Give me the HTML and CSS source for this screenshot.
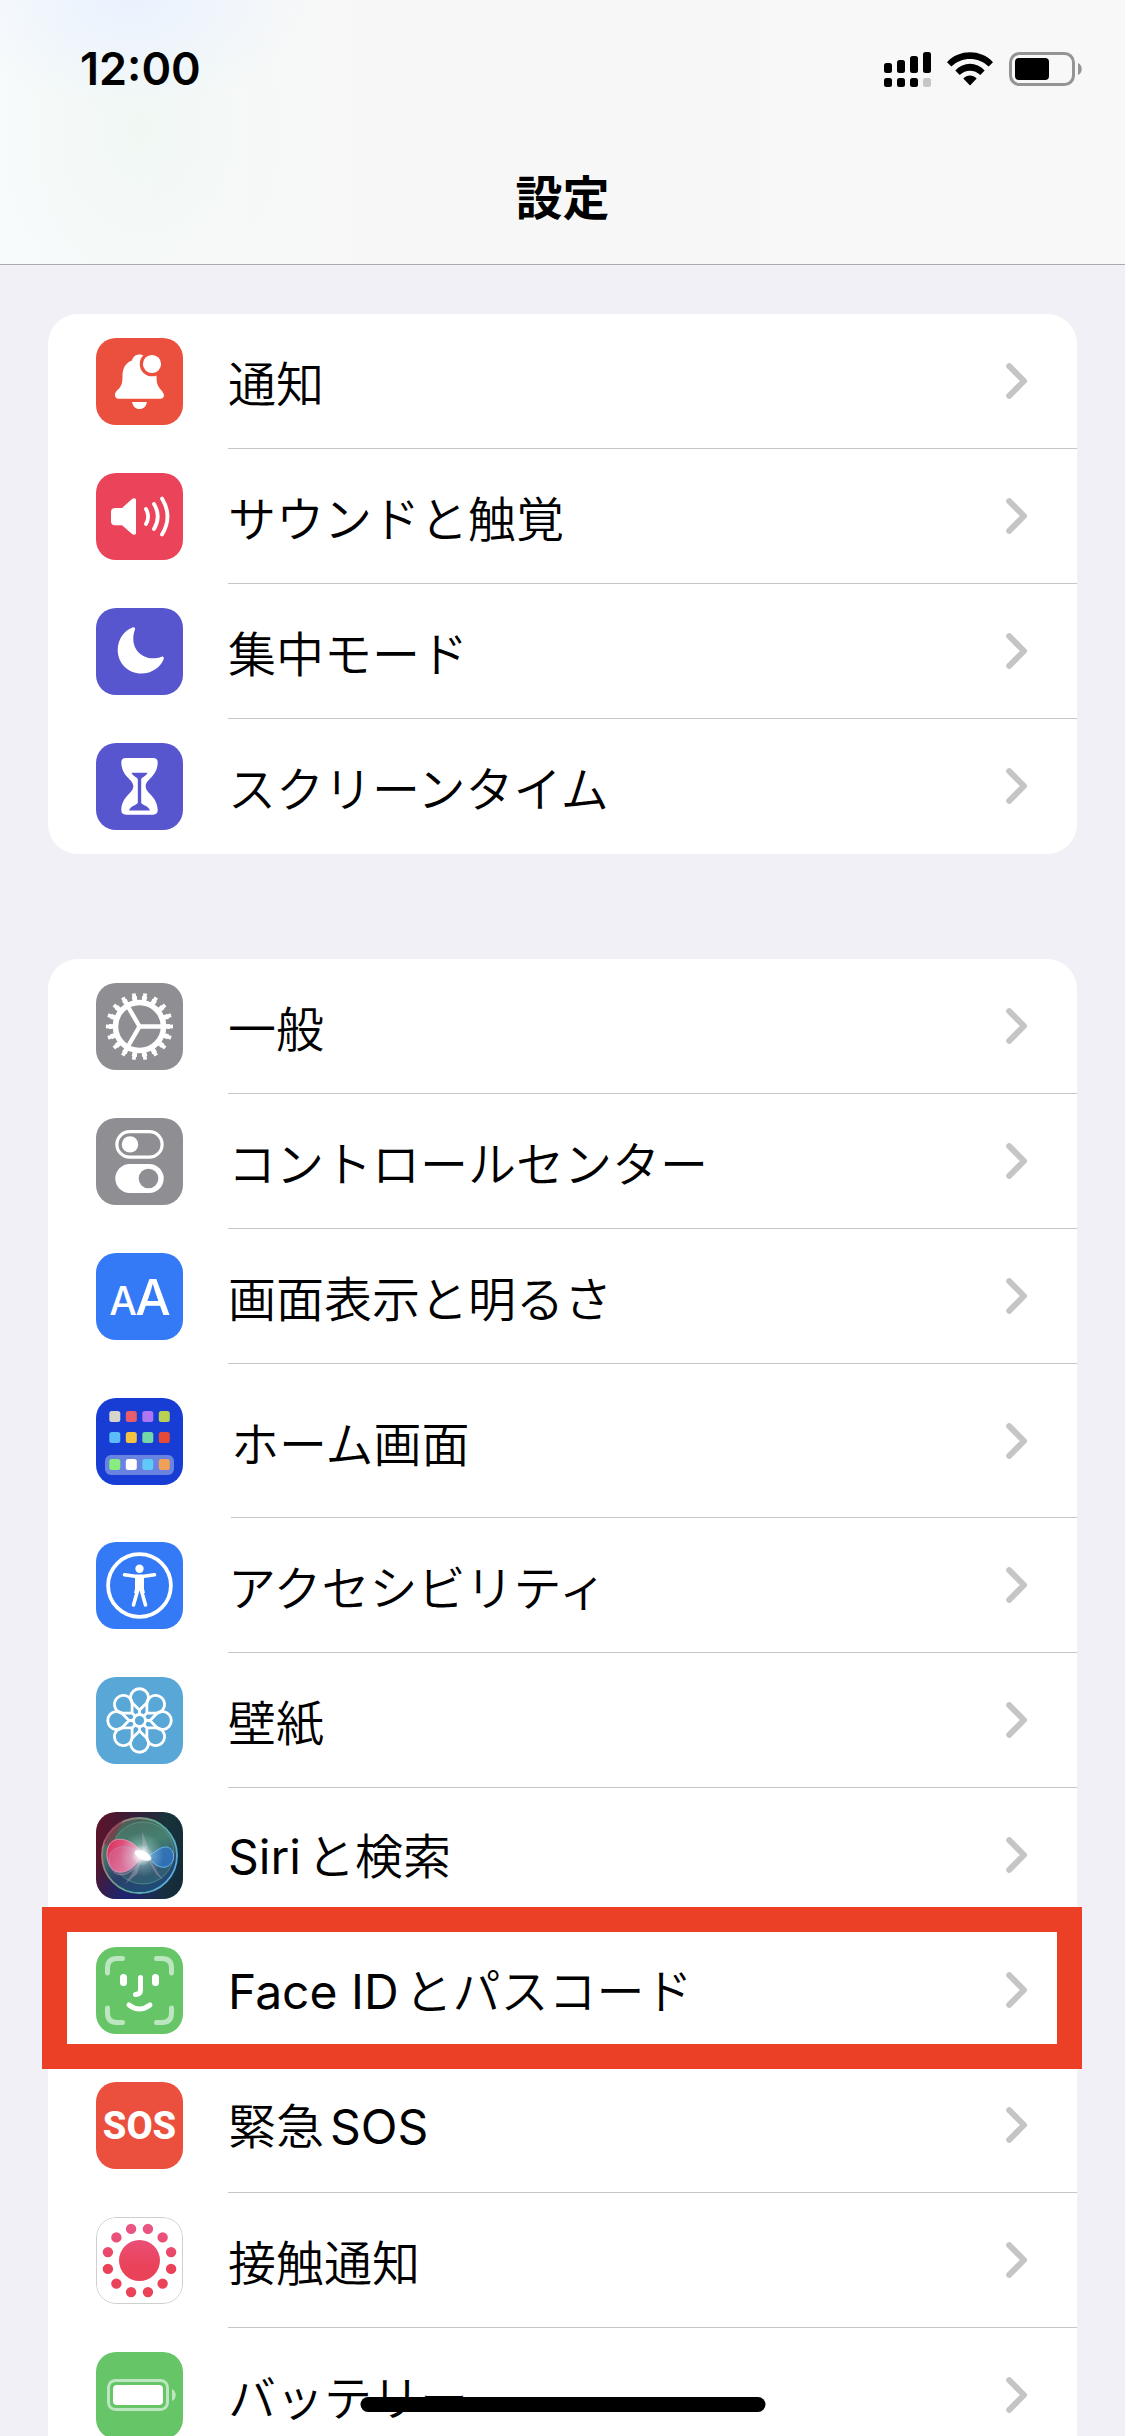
FILE: index.html
```html
<!DOCTYPE html>
<html lang="ja">
<head>
<meta charset="utf-8">
<meta name="viewport" content="width=device-width, initial-scale=1">
<title>設定</title>
<link rel="stylesheet" href="styles.css">
</head>
<body>
<svg class="defs" aria-hidden="true">
  <symbol id="chevron" viewBox="0 0 22 36"><path d="M3.2 3.2 18 18 3.2 32.8" fill="none" stroke="#c5c5c7" stroke-width="6" stroke-linecap="round" stroke-linejoin="round"/></symbol>
  <path id="petal" d="M43.5 33 35.8 25.4A9 9 0 1 1 51.2 25.4ZM43.5 33V38"/>
</svg>

<header class="header">
  <div class="status">
    <time class="clock">12:00</time>
    <div class="indicators">
      <svg width="47" height="35" viewBox="0 0 47 35" aria-label="電波">
        <rect x="0" y="11" width="8" height="10" rx="2.5"/><rect x="13" y="8" width="8" height="13" rx="2.5"/><rect x="26" y="4" width="8" height="17" rx="2.5"/><rect x="39" y="0" width="8" height="21" rx="2.5"/>
        <rect x="0" y="26" width="8" height="9" rx="2.5"/><rect x="13" y="26" width="8" height="9" rx="2.5"/><rect x="26" y="26" width="8" height="9" rx="2.5"/><rect x="39" y="26" width="8" height="9" rx="2.5" fill="#c6c6c6"/>
      </svg>
      <svg width="46" height="34" viewBox="0 0 46 34" aria-label="Wi-Fi">
        <path d="M0 10.2C12-3 34-3 46 10.2L41.7 14.6C31.500 4.300 14.500 4.300 4.300 14.600ZM8.300 18.600C16.500 9.600 29.500 9.600 37.700 18.600L33.300 23.100C27.500 17.200 18.500 17.200 12.700 23.100ZM16.300 26.600C20 22.300 26 22.300 29.700 26.600L23 33.500Z"/>
      </svg>
      <svg width="73" height="34" viewBox="0 0 73 34" aria-label="バッテリー残量">
        <rect x="1.500" y="1.500" width="63" height="31" rx="9" fill="none" stroke="#949494" stroke-width="3"/><rect x="6" y="6" width="34" height="22" rx="4"/><path d="M69 11C74 13 74 21 69 23Z" fill="#949494"/>
      </svg>
    </div>
  </div>
  <h1 class="title">設定</h1>
</header>

<main class="content">
  <ul class="group">
    <li class="row"><a class="link" href="#notifications">
      <svg class="icon icon-red" viewBox="0 0 87 87"><g fill="#fff"><path d="M43.500 16.500C40 16.500 37 18.500 36 22.500 29 25 26.500 31 26.500 38 26.500 46 25 49 21 52.500 19 54.500 19 56 19 57.500 19 59.500 20.500 60.700 22.500 60.700H64.500C66.500 60.700 68 59.500 68 57.500 68 56 67 54.500 66 53 62 49 60.500 46 60.500 38 60.500 31 58 25 51 22.500 50 18.500 47 16.500 43.500 16.500ZM36 64H51C50 68.500 47.500 71 43.500 71S37 68.500 36 64Z"/><circle cx="56" cy="26" r="10.700" stroke="#eb4f3d" stroke-width="3.200"/></g></svg>
      <span class="body"><span class="label">通知</span><svg class="chevron"><use href="#chevron"/></svg></span></a></li>
    <li class="row"><a class="link" href="#sounds">
      <svg class="icon icon-pink" viewBox="0 0 87 87"><path d="M19 35H26L35.500 26.500C38 24.500 40 25 40 27.500V59.500C40 62 38 62.500 35.500 60.500L26 52.300H19Q15 52.300 15 48.300V39Q15 35 19 35Z" fill="#fff"/><path d="M50 36Q54.300 43.500 50 51M58 31Q65.500 43.500 58 56M66 25.500Q77 43.500 66 61.500" fill="none" stroke="#fff" stroke-width="3.800" stroke-linecap="round"/></svg>
      <span class="body"><span class="label">サウンドと触覚</span><svg class="chevron"><use href="#chevron"/></svg></span></a></li>
    <li class="row"><a class="link" href="#focus">
      <svg class="icon icon-indigo" viewBox="0 0 87 87"><path d="M36.500 19.500C28 22.500 21.700 31.500 21.700 42 21.700 55 32 65.500 45.500 65.500 56 65.500 64.500 59.500 67.800 50.800 68.300 49.300 67 48.200 65.500 48.700 62 50.200 59 50.300 57 50.300 46 50.300 37.300 42 37.300 31 37.300 28 37.600 25 39 21.500 39.600 19.900 38 19 36.500 19.500Z" fill="#fff"/></svg>
      <span class="body"><span class="label">集中モード</span><svg class="chevron"><use href="#chevron"/></svg></span></a></li>
    <li class="row"><a class="link" href="#screen-time">
      <svg class="icon icon-indigo" viewBox="0 0 87 87"><path d="M30 15H57Q62 15 61.700 20C61 34 49.700 36 49.700 43.300S61 53 61.700 66.500Q62 71.700 57 71.700H30Q25 71.700 25.300 66.500C26 53 37.300 50.500 37.300 43.300S26 34 25.300 20Q25 15 30 15Z" fill="#fff"/><path d="M35.500 29.800H51.500C50.500 33 46.500 34 45.200 36V60C47 62.500 52 62.500 54 67.500H33C35 62.500 40 62.500 41.800 60V36C40.500 34 36.500 33 35.500 29.800Z" fill="#5856ce"/></svg>
      <span class="body"><span class="label">スクリーンタイム</span><svg class="chevron"><use href="#chevron"/></svg></span></a></li>
  </ul>

  <ul class="group">
    <li class="row"><a class="link" href="#general">
      <svg class="icon icon-gray" viewBox="0 0 87 87"><g fill="none" stroke="#fff"><circle cx="43.500" cy="43.500" r="24" stroke-width="5.600"/><circle cx="43.500" cy="43.500" r="28" stroke-width="5" pathLength="18" stroke-dasharray=".5 .5" stroke-dashoffset=".25"/><circle cx="43.500" cy="43.500" r="31.300" stroke-width="4.500" pathLength="18" stroke-dasharray=".34 .66" stroke-dashoffset=".17"/><path d="M43.500 43.500H66M43.500 43.500 32.200 24M43.500 43.500 32.200 63" stroke-width="4.400"/></g></svg>
      <span class="body"><span class="label">一般</span><svg class="chevron"><use href="#chevron"/></svg></span></a></li>
    <li class="row"><a class="link" href="#control-center">
      <svg class="icon icon-gray" viewBox="0 0 87 87"><rect x="20.900" y="13.600" width="45.200" height="25.600" rx="12.800" fill="none" stroke="#fff" stroke-width="3.200"/><circle cx="34" cy="26.400" r="8.200" fill="#fff"/><rect x="19.300" y="46" width="48.400" height="29" rx="14.500" fill="#fff"/><circle cx="52.500" cy="60.500" r="9.800" fill="#8e8e93"/></svg>
      <span class="body"><span class="label">コントロールセンター</span><svg class="chevron"><use href="#chevron"/></svg></span></a></li>
    <li class="row"><a class="link" href="#display">
      <svg class="icon icon-blue" viewBox="0 0 87 87"><text class="glyph-a" x="27" y="62" font-size="39">A</text><text class="glyph-a" x="57" y="62" font-size="50">A</text></svg>
      <span class="body"><span class="label">画面表示と明るさ</span><svg class="chevron"><use href="#chevron"/></svg></span></a></li>
    <li class="row row-tall"><a class="link" href="#home-screen">
      <svg class="icon icon-home" viewBox="0 0 87 87"><rect x="9" y="57" width="69" height="20" rx="6" fill="#6883e0"/>
        <rect x="13.300" y="13" width="11" height="11" rx="2.500" fill="#d6d5cc"/><rect x="29.800" y="13" width="11" height="11" rx="2.500" fill="#e85d6c"/><rect x="46.300" y="13" width="11" height="11" rx="2.500" fill="#ae75f4"/><rect x="62.800" y="13" width="11" height="11" rx="2.500" fill="#b9d153"/>
        <rect x="13.300" y="34" width="11" height="11" rx="2.500" fill="#5bbcf8"/><rect x="29.800" y="34" width="11" height="11" rx="2.500" fill="#f5c343"/><rect x="46.300" y="34" width="11" height="11" rx="2.500" fill="#74d7a8"/><rect x="62.800" y="34" width="11" height="11" rx="2.500" fill="#e54a39"/>
        <rect x="13.300" y="61" width="11" height="11" rx="2.500" fill="#86ee7e"/><rect x="29.800" y="61" width="11" height="11" rx="2.500" fill="#fff"/><rect x="46.300" y="61" width="11" height="11" rx="2.500" fill="#5fcaf9"/><rect x="62.800" y="61" width="11" height="11" rx="2.500" fill="#f0a057"/></svg>
      <span class="body"><span class="label">ホーム画面</span><svg class="chevron"><use href="#chevron"/></svg></span></a></li>
    <li class="row"><a class="link" href="#accessibility">
      <svg class="icon icon-blue" viewBox="0 0 87 87"><circle cx="43.500" cy="43.500" r="31.400" fill="none" stroke="#fff" stroke-width="3.800"/><circle cx="43.500" cy="26.700" r="4.200" fill="#fff"/><path d="M28.500 32.800 39 34.300H48L58.500 32.800M37.500 63 42 47H45L49.500 63" fill="none" stroke="#fff" stroke-width="3.600" stroke-linecap="round" stroke-linejoin="round"/><path d="M39 33.500H48V47L49 51H45.500L43.500 47 41.500 51H38L39 47Z" fill="#fff"/></svg>
      <span class="body"><span class="label">アクセシビリティ</span><svg class="chevron"><use href="#chevron"/></svg></span></a></li>
    <li class="row"><a class="link" href="#wallpaper">
      <svg class="icon icon-sky" viewBox="0 0 87 87"><g fill="none" stroke="#fff" stroke-width="2.800" stroke-linejoin="round"><use href="#petal"/><use href="#petal" transform="rotate(45 43.500 43.500)"/><use href="#petal" transform="rotate(90 43.500 43.500)"/><use href="#petal" transform="rotate(135 43.500 43.500)"/><use href="#petal" transform="rotate(180 43.500 43.500)"/><use href="#petal" transform="rotate(225 43.500 43.500)"/><use href="#petal" transform="rotate(270 43.500 43.500)"/><use href="#petal" transform="rotate(315 43.500 43.500)"/><circle cx="43.500" cy="43.500" r="6"/></g></svg>
      <span class="body"><span class="label">壁紙</span><svg class="chevron"><use href="#chevron"/></svg></span></a></li>
    <li class="row"><a class="link" href="#siri">
      <svg class="icon" viewBox="0 0 87 87">
        <defs>
          <linearGradient id="siri-bg" x1="0" y1=".3" x2="1" y2=".5"><stop offset="0" stop-color="#5c142b"/><stop offset=".4" stop-color="#33203a"/><stop offset=".75" stop-color="#18333a"/><stop offset="1" stop-color="#142c3a"/></linearGradient>
          <radialGradient id="siri-base" cx=".35" cy="1" r=".5"><stop offset="0" stop-color="#1d2474"/><stop offset="1" stop-color="#1d2474" stop-opacity="0"/></radialGradient>
          <linearGradient id="siri-orb" x1=".25" y1="0" x2=".6" y2="1"><stop offset="0" stop-color="#4d5b55"/><stop offset=".4" stop-color="#41786b"/><stop offset=".7" stop-color="#2b4068"/><stop offset="1" stop-color="#1d4d79"/></linearGradient>
          <linearGradient id="siri-rim" x1="0" y1=".2" x2="1" y2=".7"><stop offset="0" stop-color="#bf6875"/><stop offset=".5" stop-color="#5fa98d"/><stop offset="1" stop-color="#5aaee6"/></linearGradient>
          <linearGradient id="siri-wave" x1="0" y1="0" x2="1" y2=".4"><stop offset="0" stop-color="#d82b57"/><stop offset="1" stop-color="#e98ab0"/></linearGradient>
          <radialGradient id="siri-glow"><stop offset="0" stop-color="#fff"/><stop offset=".2" stop-color="#fff" stop-opacity=".85"/><stop offset=".5" stop-color="#dff" stop-opacity=".28"/><stop offset="1" stop-color="#dff" stop-opacity="0"/></radialGradient>
        </defs>
        <rect width="87" height="87" fill="url(#siri-bg)"/><rect width="87" height="87" fill="url(#siri-base)"/>
        <circle cx="43.500" cy="43.500" r="37.500" fill="url(#siri-orb)" stroke="url(#siri-rim)" stroke-width="1.800"/>
        <path d="M8 32C10 20 18 12 27 9 20 20 19 28 15 34Z" fill="#8c3043" opacity=".6"/>
        <circle cx="47" cy="41" r="31" fill="#4d927e" fill-opacity=".3" stroke="#68b59b" stroke-opacity=".5"/>
        <path d="M48 44C40 30 26 24 17 29 7 35 10 58 22 60 35 62 41 49 48 44Z" fill="url(#siri-wave)" stroke="#e58fae" stroke-width="1"/>
        <path d="M48 44C37 32 20 32 14 42 11 55 19 66 30 62 40 58 44 49 48 44Z" fill="#c68bb8" fill-opacity=".25" stroke="#bb91bf" stroke-opacity=".6"/>
        <path d="M48 44C56 45 62 34 71 35 80 37 80 52 70 55 60 57 56 47 48 44Z" fill="#2f76c5" fill-opacity=".8" stroke="#62b9ec" stroke-width="1"/>
        <path d="M50 43 67 68 60 62ZM47 42 46 19 52 35ZM46 46 29 72 41 62Z" fill="#c9a5c8" opacity=".4"/>
        <circle cx="46" cy="43" r="22" fill="url(#siri-glow)"/><ellipse cx="47" cy="43.500" rx="9" ry="4" transform="rotate(25 47 43.500)" fill="#fff"/>
      </svg>
      <span class="body"><span class="label"><span class="latin">Siri</span>と検索</span><svg class="chevron"><use href="#chevron"/></svg></span></a></li>
    <li class="row row-marked"><a class="link" href="#face-id">
      <svg class="icon icon-green" viewBox="0 0 87 87"><g fill="none" stroke="#fff" stroke-width="5" stroke-linecap="round"><path d="M11.500 26V21Q11.500 11.500 21 11.500H26.500M60.500 11.500H66Q75.500 11.500 75.500 21V26M75.500 61V66Q75.500 75.500 66 75.500H60.500M26.500 75.500H21Q11.500 75.500 11.500 66V61" stroke="#bce6bf"/><path d="M44.500 30.500V43Q44.500 47.500 39.500 47.500M33 58Q43.500 66 54 58"/><path d="M27.500 30.500V35.500M59.500 30.500V35.500" stroke-width="7"/></g></svg>
      <span class="body"><span class="label"><span class="latin">Face ID</span>とパスコード</span><svg class="chevron"><use href="#chevron"/></svg></span></a></li>
    <li class="row"><a class="link" href="#sos">
      <svg class="icon icon-red" viewBox="0 0 87 87"><text class="glyph-sos" x="43.500" y="57">SOS</text></svg>
      <span class="body"><span class="label">緊急<span class="latin latin-end">SOS</span></span><svg class="chevron"><use href="#chevron"/></svg></span></a></li>
    <li class="row"><a class="link" href="#exposure">
      <svg class="icon icon-white" viewBox="0 0 87 87"><defs><linearGradient id="exposure" x1="0" y1="8" x2="0" y2="50" gradientUnits="userSpaceOnUse"><stop offset="0" stop-color="#ea5687"/><stop offset="1" stop-color="#ea4259"/></linearGradient></defs><circle cx="43.500" cy="43.500" r="20.500" fill="url(#exposure)"/><circle cx="43.500" cy="43.500" r="32.700" fill="none" stroke="url(#exposure)" stroke-width="10.400" stroke-linecap="round" pathLength="12" stroke-dasharray="0 1" stroke-dashoffset=".5"/><rect x=".5" y=".5" width="86" height="86" rx="19.500" fill="none" stroke="#cfcfd2"/></svg>
      <span class="body"><span class="label">接触通知</span><svg class="chevron"><use href="#chevron"/></svg></span></a></li>
    <li class="row"><a class="link" href="#battery">
      <svg class="icon icon-green" viewBox="0 0 87 87"><rect x="12.500" y="28.500" width="59" height="29" rx="7" fill="none" stroke="#bce6bf" stroke-width="3"/><rect x="17" y="33" width="50" height="20" rx="4" fill="#fff"/><path d="M76 37C81 39 81 47 76 49Z" fill="#bce6bf"/></svg>
      <span class="body"><span class="label">バッテリー</span><svg class="chevron"><use href="#chevron"/></svg></span></a></li>
  </ul>
</main>
<div class="home-indicator"></div>
</body>
</html>
```

FILE: styles.css
```css
* {
  box-sizing: border-box;
}

body {
  display: flex;
  flex-direction: column;
  height: 100vh;
  margin: 0;
  overflow: hidden;
  background: #f1f0f6;
  color: #000;
  font-family: "Noto Sans CJK JP", sans-serif;
  font-size: 48px;
  font-weight: 350;
}

.defs {
  position: absolute;
  width: 0;
  height: 0;
}

.header {
  flex: none;
  border-bottom: 1px solid #a9a9ae;
  background:
    radial-gradient(ellipse 180px 110px at 130px 0, #eaf2fe, transparent),
    radial-gradient(ellipse 160px 200px at 140px 130px, #f1f8f4, transparent),
    linear-gradient(90deg, #f8fbfc, #f7f7f7 400px, #f8f8f8);
}

.status {
  display: flex;
  align-items: center;
  justify-content: space-between;
  height: 138px;
  padding: 0 43px 0 80px;
}

.clock {
  font: 600 45px/56px Inter, sans-serif;
}

.indicators {
  display: flex;
  align-items: center;
  gap: 16px;
}

.title {
  margin: 0;
  padding: 25px 0 37px;
  font-size: 47px;
  font-weight: 700;
  line-height: 64px;
  text-align: center;
}

.content {
  display: flex;
  flex: 1;
  flex-direction: column;
  gap: 105px;
  min-height: 0;
  padding: 49px 48px;
  overflow-y: auto;
  scrollbar-width: none;
}

.group {
  flex: none;
  margin: 0;
  padding: 0;
  border-radius: 30px;
  background: #fff;
  list-style: none;
}

.row {
  position: relative;
}

.link {
  display: flex;
  align-items: center;
  gap: 45px;
  min-height: 135px;
  padding-left: 48px;
  color: inherit;
  text-decoration: none;
}

.row-tall .link {
  gap: 48px;
  min-height: 154px;
}

.row-marked::after {
  content: "";
  position: absolute;
  z-index: 1;
  inset: -16px -5px -11px -6px;
  border: 25px solid #eb4026;
  pointer-events: none;
}

.icon {
  flex: none;
  width: 87px;
  height: 87px;
  border-radius: 20px;
}

.icon-red { background: #eb4f3d; }
.icon-pink { background: #eb445a; }
.icon-indigo { background: #5856ce; }
.icon-gray { background: #8e8e93; }
.icon-blue { background: #3479f6; }
.icon-home { background: #183dd4; }
.icon-sky { background: #59a7d7; }
.icon-green { background: #66c567; }
.icon-white { background: #fff; }

.glyph-a {
  fill: #fff;
  font-family: Inter, sans-serif;
  font-weight: 500;
  text-anchor: middle;
}

.glyph-sos {
  fill: #fff;
  font: 800 38px Roboto, sans-serif;
  text-anchor: middle;
}

.body {
  display: flex;
  flex: 1;
  align-items: center;
  align-self: stretch;
  justify-content: space-between;
  padding-right: 49px;
  border-bottom: 1px solid #c6c6c8;
}

.row:last-child .body {
  border-bottom-color: transparent;
}

.label {
  line-height: 72px;
}

.latin {
  margin-right: 6px;
  font-family: Inter, sans-serif;
  font-weight: 400;
}

.latin-end {
  margin: 0 0 0 6px;
}

.chevron {
  flex: none;
  width: 22px;
  height: 36px;
}

.home-indicator {
  position: fixed;
  bottom: 24px;
  left: 50%;
  width: 36%;
  height: 15px;
  border-radius: 8px;
  background: #000;
  transform: translateX(-50%);
}
```
